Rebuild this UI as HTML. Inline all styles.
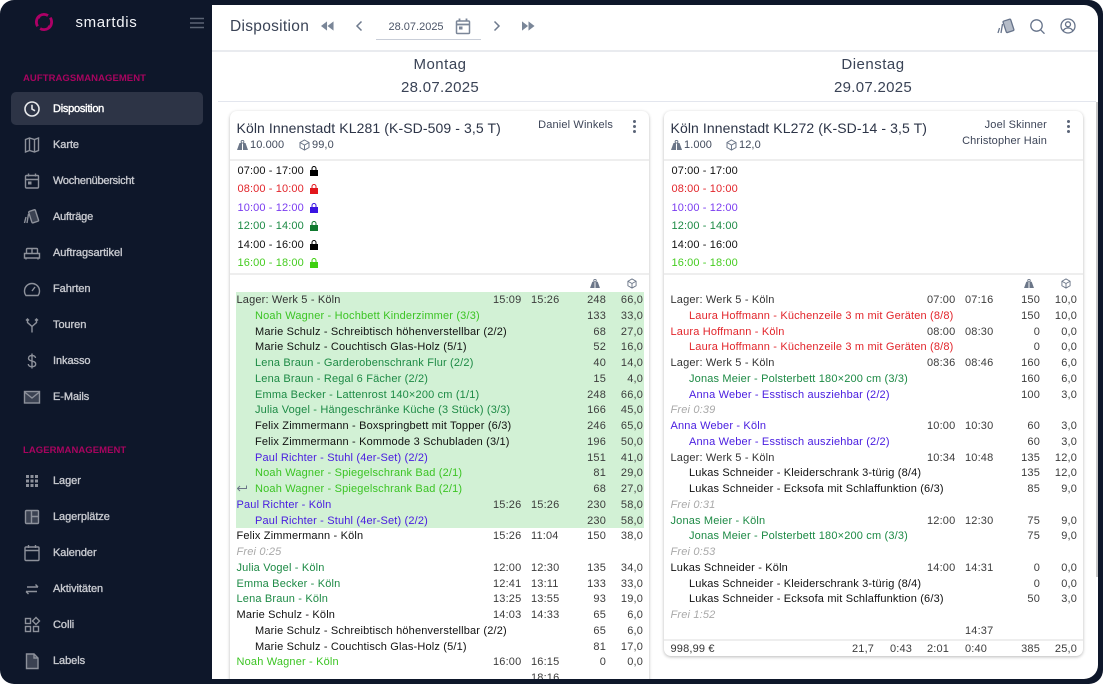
<!DOCTYPE html>
<html lang="de"><head><meta charset="utf-8"><title>Disposition</title>
<style>
*{box-sizing:border-box}
html,body{margin:0;padding:0;width:1103px;height:684px;overflow:hidden;background:#fff;font-family:"Liberation Sans",sans-serif}
#frame{position:absolute;left:0;top:0;width:1103px;height:684px;background:#0e172a;border-radius:14px;overflow:hidden}
#main{position:absolute;left:212px;top:5px;width:886px;height:674px;background:#fff;border-radius:0 14px 14px 0;overflow:hidden}
.a{position:absolute;white-space:nowrap}
.side{position:absolute;left:53px;margin-top:1px;font-size:11px;line-height:14px;color:#c7c9cf;-webkit-text-stroke:.35px #c7c9cf;letter-spacing:-.06px;white-space:nowrap}
.sec{position:absolute;left:23px;margin-top:1px;font-size:9.5px;line-height:12px;color:#a8045f;letter-spacing:.06px;font-weight:bold;white-space:nowrap}
.ic{position:absolute;left:23px;margin-top:1px;width:18px;height:18px;fill:none;stroke:#8d919b;stroke-width:1.4}
.card{position:absolute;top:106px;width:419px;background:#fff;border-radius:7px;box-shadow:0 1px 3px rgba(0,0,0,.28);overflow:hidden}
.sep{position:absolute;left:0;width:419px;height:2px;background:#eee}
.tt{position:absolute;left:6.5px;top:8px;font-size:14px;line-height:18px;color:#2c3447;letter-spacing:.1px;white-space:nowrap}
.cap{position:absolute;top:27px;font-size:11px;line-height:14px;color:#414a5c;white-space:nowrap;letter-spacing:.1px}
.drv{position:absolute;right:36px;margin-top:1px;font-size:11px;line-height:14px;color:#3d4558;text-align:right;white-space:nowrap;letter-spacing:.15px}
.ts{position:absolute;left:7.5px;margin-top:1px;font-size:11px;line-height:14px;letter-spacing:.12px;white-space:nowrap}
.r{position:absolute;left:6px;margin-top:1px;width:408px;height:16px;font-size:11px;line-height:16px;color:#333;letter-spacing:.17px;white-space:nowrap}
.r .n{position:absolute;left:.5px;top:0}
.r.i .n{left:19px}
.r .t1{position:absolute;left:257px;top:0;color:#3c3c3c}
.r .t2{position:absolute;left:295px;top:0;color:#3c3c3c}
.r .w{position:absolute;right:38px;top:0;color:#3c3c3c}
.r .v{position:absolute;right:1px;top:0;color:#3c3c3c}
.k .n{color:#111}.l .n{color:#333}
.re .n{color:#e2252b}.pu .n{color:#4a1ee0}.gr .n{color:#1d8a45}.li .n{color:#3cc424}
.fr .n{color:#a9a9a9;font-style:italic}
.g{position:absolute;left:6px;top:181px;width:408px;height:236px;background:#d2f1d5}
.dots{position:absolute;width:3px;height:3px;background:#5a6477;border-radius:50%;box-shadow:0 5px 0 #5a6477,0 10px 0 #5a6477}
.day{position:absolute;width:200px;text-align:center;font-size:15px;line-height:18px;color:#3a4356;letter-spacing:.3px}
.lk{position:absolute;left:80px}
</style></head><body>
<div id="frame">

<!-- logo -->
<svg class="a" style="left:34px;top:12px" width="20" height="20" viewBox="0 0 20 20" fill="none" stroke="#ad0066" stroke-width="2.8"><circle cx="10" cy="10" r="7.600" stroke-dasharray="20.500 3.400" transform="rotate(-35 10 10)"/><path d="M3.500 4.500l2.500 1.500M16.500 15.500L14 14" stroke-width="1.800"/></svg>
<div class="a" style="left:75.500px;top:14px;font-size:15px;line-height:18px;color:#f2f4f8;letter-spacing:.65px">smartdis</div>
<svg class="a" style="left:190px;top:17px" width="14" height="12" viewBox="0 0 14 12" fill="none" stroke="#5b6474" stroke-width="1.500"><path d="M0 1.500h14M0 6h14M0 10.500h14"/></svg>

<div class="sec" style="top:71.500px">AUFTRAGSMANAGEMENT</div>
<div class="a" style="left:11px;top:92px;width:192px;height:33px;background:#2d3446;border-radius:5px"></div>
<svg class="ic" style="top:99px;stroke:#e8e9ec;stroke-width:1.600" viewBox="0 0 18 18"><circle cx="9" cy="9" r="7"/><path d="M9 4.800V9l3 1.800"/></svg>
<div class="side" style="top:101px;color:#fff;-webkit-text-stroke:.4px #fff;letter-spacing:-.25px">Disposition</div>

<svg class="ic" style="top:135px" viewBox="0 0 18 18"><path d="M2.500 3.500L6.500 2l5 1.500 4-1.500v12.500l-4 1.500-5-1.500-4 1.500zM6.500 2v12.500M11.500 3.500V16"/></svg>
<div class="side" style="top:137px">Karte</div>
<svg class="ic" style="top:171px" viewBox="0 0 18 18"><rect x="2.500" y="3.500" width="13" height="12.500" rx="1"/><path d="M2.500 7.500h13M5.500 1.500v3M12.500 1.500v3"/><rect x="5" y="9.500" width="3.500" height="3" fill="#8d919b" stroke="none"/></svg>
<div class="side" style="top:173px;letter-spacing:-.25px">Wochenübersicht</div>
<svg class="ic" style="top:207px" viewBox="0 0 18 18"><rect x="7" y="2.500" width="7" height="12" rx="1" fill="#3b4252" transform="rotate(-18 10 8)"/><path d="M5.500 6L4 15M3 9L1.500 15"/></svg>
<div class="side" style="top:209px;letter-spacing:-.2px">Aufträge</div>
<svg class="ic" style="top:243px" viewBox="0 0 18 18"><path d="M1.500 9.500h15v4.500h-15zM3.500 9.500V5.500q0-1 1-1h9q1 0 1 1v4M9 4.500v5M3 14v1.500M15 14v1.500"/></svg>
<div class="side" style="top:245px">Auftragsartikel</div>
<svg class="ic" style="top:279px" viewBox="0 0 18 18"><path d="M3 15.500h12a7.500 7.500 0 1 0-12 0zM9 11l3-4"/></svg>
<div class="side" style="top:281px">Fahrten</div>
<svg class="ic" style="top:315px" viewBox="0 0 18 18"><path d="M9 16.500v-6L4.500 6.500V3M9 10.500l4.500-4V3M3 4.500L4.500 3 6 4.500M12 4.500L13.500 3 15 4.500"/></svg>
<div class="side" style="top:317px">Touren</div>
<svg class="ic" style="top:351px" viewBox="0 0 18 18"><path d="M12.500 6c0-1.500-1.500-2.500-3.500-2.500S5.500 4.500 5.500 6.200 7 8.500 9 9s3.700 1 3.700 3-1.700 2.700-3.700 2.700-3.700-1-3.700-2.700M9 1.500v15"/></svg>
<div class="side" style="top:353px">Inkasso</div>
<svg class="ic" style="top:387px" viewBox="0 0 18 18"><rect x="1.500" y="3.500" width="15" height="11.500" fill="#3b4252"/><path d="M1.500 4l7.500 6 7.500-6"/></svg>
<div class="side" style="top:389px">E-Mails</div>

<div class="sec" style="top:443.500px">LAGERMANAGEMENT</div>

<svg class="ic" style="top:471px;fill:#8d919b;stroke:none" viewBox="0 0 18 18"><path d="M3 3h3v3H3zM7.500 3h3v3h-3zM12 3h3v3h-3zM3 7.500h3v3H3zM7.500 7.500h3v3h-3zM12 7.500h3v3h-3zM3 12h3v3H3zM7.500 12h3v3h-3zM12 12h3v3h-3z"/></svg>
<div class="side" style="top:473px">Lager</div>
<svg class="ic" style="top:507px" viewBox="0 0 18 18"><rect x="2.500" y="2.500" width="13" height="13" rx="1" fill="#3b4252"/><path d="M8.500 2.500v13M8.500 8.500h7"/></svg>
<div class="side" style="top:509px">Lagerplätze</div>
<svg class="ic" style="top:543px" viewBox="0 0 18 18"><rect x="2" y="3" width="14" height="13.500" rx="1"/><path d="M2 6.500h14M5.500 1v3M12.500 1v3"/></svg>
<div class="side" style="top:545px">Kalender</div>
<svg class="ic" style="top:579px" viewBox="0 0 18 18"><path d="M4 7h11M12.500 4.500L15 7M14 11.500H3M5.500 14L3 11.500"/></svg>
<div class="side" style="top:581px">Aktivitäten</div>
<svg class="ic" style="top:615px" viewBox="0 0 18 18"><rect x="2.500" y="2.500" width="5" height="5"/><rect x="2.500" y="10.500" width="5" height="5"/><rect x="10.500" y="10.500" width="5" height="5"/><path d="M13 1.500l3.500 3.500-3.500 3.500L9.500 5z"/></svg>
<div class="side" style="top:617px">Colli</div>
<svg class="ic" style="top:651px" viewBox="0 0 18 18"><path d="M3.500 2h7.500l4 4v10.500h-11.500z" fill="#3b4252"/><path d="M11 2v4h4"/></svg>
<div class="side" style="top:653px">Labels</div>

<div id="main">
  <!-- top bar -->
  <div class="a" style="left:0;top:45px;width:886px;height:1.500px;background:#e9ebef"></div>
  <div class="a" style="left:18px;top:12px;font-size:15.500px;line-height:19px;color:#3a4356;letter-spacing:.3px">Disposition</div>
  <svg class="a" style="left:109px;top:16px" width="13" height="10" viewBox="0 0 14 10" fill="#7a8698"><path d="M6.500 0v10L0 5zM13.500 0v10L7 5z"/></svg>
  <svg class="a" style="left:142px;top:15px" width="10" height="12" viewBox="0 0 10 12" fill="none" stroke="#6e7a8d" stroke-width="1.500"><path d="M7.500 1.500L3 6l4.500 4.500"/></svg>
  <div class="a" style="left:176.500px;top:15px;font-size:11px;line-height:14px;color:#4c5568">28.07.2025</div>
  <svg class="a" style="left:243px;top:13px" width="16" height="17" viewBox="0 0 16 17" fill="none" stroke="#7b8698" stroke-width="1.500"><rect x="1.500" y="3" width="13" height="12.500" rx="1"/><path d="M1.500 6.500h13M4.500 .5v3M11.500 .5v3" stroke-width="1.800"/><rect x="4" y="8.500" width="3.500" height="3" fill="#7b8698" stroke="none"/></svg>
  <div class="a" style="left:164px;top:34px;width:105px;height:1.200px;background:#c9ced8"></div>
  <svg class="a" style="left:280px;top:15px" width="10" height="12" viewBox="0 0 10 12" fill="none" stroke="#6e7a8d" stroke-width="1.500"><path d="M2.500 1.500L7 6l-4.500 4.500"/></svg>
  <svg class="a" style="left:310px;top:16px" width="13" height="10" viewBox="0 0 14 10" fill="#7a8698"><path d="M0 0v10l6.500-5zM7 0v10l6.500-5z"/></svg>
  <svg class="a" style="left:784px;top:12px" width="20" height="20" viewBox="0 0 20 20" fill="none" stroke="#66738a" stroke-width="1.300"><rect x="8.500" y="3" width="8" height="12" rx="1" fill="#b5bcc8" transform="rotate(-18 12 9)"/><path d="M6.500 7L5 16M3.500 11L2 16"/></svg>
  <svg class="a" style="left:818px;top:14px" width="15" height="15" viewBox="0 0 15 15" fill="none" stroke="#66738a" stroke-width="1.300"><circle cx="6.500" cy="6.500" r="5.700"/><path d="M10.500 10.700l4 4"/></svg>
  <svg class="a" style="left:848px;top:13px" width="16" height="16" viewBox="0 0 16 16" fill="none" stroke="#66738a" stroke-width="1.300"><circle cx="8" cy="8" r="7"/><circle cx="8" cy="6.300" r="2.500"/><path d="M3.200 13c1-2.500 3-3 4.800-3s3.800.5 4.800 3"/></svg>

  <!-- day headers -->
  <div class="day" style="left:128px;top:51px;letter-spacing:.5px">Montag</div>
  <div class="day" style="left:128px;top:74px">28.07.2025</div>
  <div class="day" style="left:561px;top:51px;letter-spacing:.5px">Dienstag</div>
  <div class="day" style="left:561px;top:74px">29.07.2025</div>
  <div class="a" style="left:6px;top:96px;width:878px;height:1px;background:#e3e6ee"></div>
  <div class="a" style="left:884px;top:97px;width:2px;height:475px;background:#c8c8c8"></div>

  <!-- CARD 1 -->
  <div class="card" style="left:18px;height:600px">
    <div class="tt">Köln Innenstadt KL281 (K-SD-509 - 3,5 T)</div>
    <svg class="a" style="left:7px;top:29px" width="11" height="10" viewBox="0 0 11 10"><path d="M2.500 3h6l2.500 7H0z" fill="#6b7688"/><circle cx="5.500" cy="1.800" r="1.400" fill="none" stroke="#6b7688"/><path d="M5.500 3.500V10" stroke="#fff"/></svg>
    <div class="cap" style="left:20px">10.000</div>
    <svg class="a" style="left:69px;top:28px" width="11" height="12" viewBox="0 0 11 12" fill="none" stroke="#6b7688"><path d="M5.500 1L10 3.500v5L5.500 11 1 8.500v-5zM1 3.500L5.500 6 10 3.500M5.500 6v5"/></svg>
    <div class="cap" style="left:82px">99,0</div>
    <div class="drv" style="top:6px">Daniel Winkels</div>
    <div class="dots" style="left:402.500px;top:9px"></div>
    <div class="sep" style="top:48px"></div>

    <div class="ts" style="top:52px;color:#111">07:00 - 17:00</div>
    <svg class="lk" style="top:55px" width="8" height="10" viewBox="0 0 8 10"><path d="M0 4h8v6H0z" fill="#000"/><path d="M2 4V2.500a2 2 0 0 1 4 0V4" fill="none" stroke="#000"/></svg>
    <div class="ts" style="top:70px;color:#e2252b">08:00 - 10:00</div>
    <svg class="lk" style="top:73px" width="8" height="10" viewBox="0 0 8 10"><path d="M0 4h8v6H0z" fill="#e2161c"/><path d="M2 4V2.500a2 2 0 0 1 4 0V4" fill="none" stroke="#e2161c"/></svg>
    <div class="ts" style="top:89px;color:#7a3cf0">10:00 - 12:00</div>
    <svg class="lk" style="top:92px" width="8" height="10" viewBox="0 0 8 10"><path d="M0 4h8v6H0z" fill="#3a14e2"/><path d="M2 4V2.500a2 2 0 0 1 4 0V4" fill="none" stroke="#3a14e2"/></svg>
    <div class="ts" style="top:107px;color:#1d8a45">12:00 - 14:00</div>
    <svg class="lk" style="top:110px" width="8" height="10" viewBox="0 0 8 10"><path d="M0 4h8v6H0z" fill="#10792f"/><path d="M2 4V2.500a2 2 0 0 1 4 0V4" fill="none" stroke="#10792f"/></svg>
    <div class="ts" style="top:126px;color:#111">14:00 - 16:00</div>
    <svg class="lk" style="top:129px" width="8" height="10" viewBox="0 0 8 10"><path d="M0 4h8v6H0z" fill="#000"/><path d="M2 4V2.500a2 2 0 0 1 4 0V4" fill="none" stroke="#000"/></svg>
    <div class="ts" style="top:144px;color:#45cc20">16:00 - 18:00</div>
    <svg class="lk" style="top:147px" width="8" height="10" viewBox="0 0 8 10"><path d="M0 4h8v6H0z" fill="#3ed010"/><path d="M2 4V2.500a2 2 0 0 1 4 0V4" fill="none" stroke="#3ed010"/></svg>
    <div class="sep" style="top:162px"></div>

    <svg class="a" style="left:360px;top:168px" width="10" height="9" viewBox="0 0 11 10"><path d="M2.500 3h6l2.500 7H0z" fill="#6b7688"/><circle cx="5.500" cy="1.800" r="1.400" fill="none" stroke="#6b7688"/><path d="M5.500 3.500V10" stroke="#fff"/></svg>
    <svg class="a" style="left:397px;top:167px" width="10" height="11" viewBox="0 0 11 12" fill="none" stroke="#6b7688"><path d="M5.500 1L10 3.500v5L5.500 11 1 8.500v-5zM1 3.500L5.500 6 10 3.500M5.500 6v5"/></svg>

    <div class="g"></div>
    <div class="r l" style="top:180px"><span class="n">Lager: Werk 5 - Köln</span><span class="t1">15:09</span><span class="t2">15:26</span><span class="w">248</span><span class="v">66,0</span></div>
    <div class="r i li" style="top:196px"><span class="n">Noah Wagner - Hochbett Kinderzimmer (3/3)</span><span class="w">133</span><span class="v">33,0</span></div>
    <div class="r i k" style="top:212px"><span class="n">Marie Schulz - Schreibtisch höhenverstellbar (2/2)</span><span class="w">68</span><span class="v">27,0</span></div>
    <div class="r i k" style="top:227px"><span class="n">Marie Schulz - Couchtisch Glas-Holz (5/1)</span><span class="w">52</span><span class="v">16,0</span></div>
    <div class="r i gr" style="top:243px"><span class="n">Lena Braun - Garderobenschrank Flur (2/2)</span><span class="w">40</span><span class="v">14,0</span></div>
    <div class="r i gr" style="top:259px"><span class="n">Lena Braun - Regal 6 Fächer (2/2)</span><span class="w">15</span><span class="v">4,0</span></div>
    <div class="r i gr" style="top:275px"><span class="n">Emma Becker - Lattenrost 140×200 cm (1/1)</span><span class="w">248</span><span class="v">66,0</span></div>
    <div class="r i gr" style="top:290px"><span class="n">Julia Vogel - Hängeschränke Küche (3 Stück) (3/3)</span><span class="w">166</span><span class="v">45,0</span></div>
    <div class="r i k" style="top:306px"><span class="n">Felix Zimmermann - Boxspringbett mit Topper (6/3)</span><span class="w">246</span><span class="v">65,0</span></div>
    <div class="r i k" style="top:322px"><span class="n">Felix Zimmermann - Kommode 3 Schubladen (3/1)</span><span class="w">196</span><span class="v">50,0</span></div>
    <div class="r i pu" style="top:338px"><span class="n">Paul Richter - Stuhl (4er-Set) (2/2)</span><span class="w">151</span><span class="v">41,0</span></div>
    <div class="r i li" style="top:353px"><span class="n">Noah Wagner - Spiegelschrank Bad (2/1)</span><span class="w">81</span><span class="v">29,0</span></div>
    <svg class="a" style="left:7px;top:374px" width="10" height="7" viewBox="0 0 10 7" fill="none" stroke="#6b7688"><path d="M9.500 .5v3h-9M3 1L.5 3.500 3 6"/></svg>
    <div class="r i li" style="top:369px"><span class="n">Noah Wagner - Spiegelschrank Bad (2/1)</span><span class="w">68</span><span class="v">27,0</span></div>
    <div class="r pu" style="top:385px"><span class="n">Paul Richter - Köln</span><span class="t1">15:26</span><span class="t2">15:26</span><span class="w">230</span><span class="v">58,0</span></div>
    <div class="r i pu" style="top:401px"><span class="n">Paul Richter - Stuhl (4er-Set) (2/2)</span><span class="w">230</span><span class="v">58,0</span></div>
    <div class="r k" style="top:416px"><span class="n">Felix Zimmermann - Köln</span><span class="t1">15:26</span><span class="t2">11:04</span><span class="w">150</span><span class="v">38,0</span></div>
    <div class="r fr" style="top:432px"><span class="n">Frei 0:25</span></div>
    <div class="r gr" style="top:448px"><span class="n">Julia Vogel - Köln</span><span class="t1">12:00</span><span class="t2">12:30</span><span class="w">135</span><span class="v">34,0</span></div>
    <div class="r gr" style="top:464px"><span class="n">Emma Becker - Köln</span><span class="t1">12:41</span><span class="t2">13:11</span><span class="w">133</span><span class="v">33,0</span></div>
    <div class="r gr" style="top:479px"><span class="n">Lena Braun - Köln</span><span class="t1">13:25</span><span class="t2">13:55</span><span class="w">93</span><span class="v">19,0</span></div>
    <div class="r k" style="top:495px"><span class="n">Marie Schulz - Köln</span><span class="t1">14:03</span><span class="t2">14:33</span><span class="w">65</span><span class="v">6,0</span></div>
    <div class="r i k" style="top:511px"><span class="n">Marie Schulz - Schreibtisch höhenverstellbar (2/2)</span><span class="w">65</span><span class="v">6,0</span></div>
    <div class="r i k" style="top:527px"><span class="n">Marie Schulz - Couchtisch Glas-Holz (5/1)</span><span class="w">81</span><span class="v">17,0</span></div>
    <div class="r li" style="top:542px"><span class="n">Noah Wagner - Köln</span><span class="t1">16:00</span><span class="t2">16:15</span><span class="w">0</span><span class="v">0,0</span></div>
    <div class="r" style="top:558px"><span class="t2">18:16</span></div>
  </div>

  <!-- CARD 2 -->
  <div class="card" style="left:452px;height:545px">
    <div class="tt">Köln Innenstadt KL272 (K-SD-14 - 3,5 T)</div>
    <svg class="a" style="left:7px;top:29px" width="11" height="10" viewBox="0 0 11 10"><path d="M2.500 3h6l2.500 7H0z" fill="#6b7688"/><circle cx="5.500" cy="1.800" r="1.400" fill="none" stroke="#6b7688"/><path d="M5.500 3.500V10" stroke="#fff"/></svg>
    <div class="cap" style="left:20px">1.000</div>
    <svg class="a" style="left:62px;top:28px" width="11" height="12" viewBox="0 0 11 12" fill="none" stroke="#6b7688"><path d="M5.500 1L10 3.500v5L5.500 11 1 8.500v-5zM1 3.500L5.500 6 10 3.500M5.500 6v5"/></svg>
    <div class="cap" style="left:75px">12,0</div>
    <div class="drv" style="top:6px">Joel Skinner</div>
    <div class="drv" style="top:22px">Christopher Hain</div>
    <div class="dots" style="left:402.500px;top:9px"></div>
    <div class="sep" style="top:48px"></div>

    <div class="ts" style="top:52px;color:#111">07:00 - 17:00</div>
    <div class="ts" style="top:70px;color:#e2252b">08:00 - 10:00</div>
    <div class="ts" style="top:89px;color:#7a3cf0">10:00 - 12:00</div>
    <div class="ts" style="top:107px;color:#1d8a45">12:00 - 14:00</div>
    <div class="ts" style="top:126px;color:#111">14:00 - 16:00</div>
    <div class="ts" style="top:144px;color:#45cc20">16:00 - 18:00</div>
    <div class="sep" style="top:162px"></div>

    <svg class="a" style="left:360px;top:168px" width="10" height="9" viewBox="0 0 11 10"><path d="M2.500 3h6l2.500 7H0z" fill="#6b7688"/><circle cx="5.500" cy="1.800" r="1.400" fill="none" stroke="#6b7688"/><path d="M5.500 3.500V10" stroke="#fff"/></svg>
    <svg class="a" style="left:397px;top:167px" width="10" height="11" viewBox="0 0 11 12" fill="none" stroke="#6b7688"><path d="M5.500 1L10 3.500v5L5.500 11 1 8.500v-5zM1 3.500L5.500 6 10 3.500M5.500 6v5"/></svg>

    <div class="r l" style="top:180px"><span class="n">Lager: Werk 5 - Köln</span><span class="t1">07:00</span><span class="t2">07:16</span><span class="w">150</span><span class="v">10,0</span></div>
    <div class="r i re" style="top:196px"><span class="n">Laura Hoffmann - Küchenzeile 3 m mit Geräten (8/8)</span><span class="w">150</span><span class="v">10,0</span></div>
    <div class="r re" style="top:212px"><span class="n">Laura Hoffmann - Köln</span><span class="t1">08:00</span><span class="t2">08:30</span><span class="w">0</span><span class="v">0,0</span></div>
    <div class="r i re" style="top:227px"><span class="n">Laura Hoffmann - Küchenzeile 3 m mit Geräten (8/8)</span><span class="w">0</span><span class="v">0,0</span></div>
    <div class="r l" style="top:243px"><span class="n">Lager: Werk 5 - Köln</span><span class="t1">08:36</span><span class="t2">08:46</span><span class="w">160</span><span class="v">6,0</span></div>
    <div class="r i gr" style="top:259px"><span class="n">Jonas Meier - Polsterbett 180×200 cm (3/3)</span><span class="w">160</span><span class="v">6,0</span></div>
    <div class="r i pu" style="top:275px"><span class="n">Anna Weber - Esstisch ausziehbar (2/2)</span><span class="w">100</span><span class="v">3,0</span></div>
    <div class="r fr" style="top:290px"><span class="n">Frei 0:39</span></div>
    <div class="r pu" style="top:306px"><span class="n">Anna Weber - Köln</span><span class="t1">10:00</span><span class="t2">10:30</span><span class="w">60</span><span class="v">3,0</span></div>
    <div class="r i pu" style="top:322px"><span class="n">Anna Weber - Esstisch ausziehbar (2/2)</span><span class="w">60</span><span class="v">3,0</span></div>
    <div class="r l" style="top:338px"><span class="n">Lager: Werk 5 - Köln</span><span class="t1">10:34</span><span class="t2">10:48</span><span class="w">135</span><span class="v">12,0</span></div>
    <div class="r i k" style="top:353px"><span class="n">Lukas Schneider - Kleiderschrank 3-türig (8/4)</span><span class="w">135</span><span class="v">12,0</span></div>
    <div class="r i k" style="top:369px"><span class="n">Lukas Schneider - Ecksofa mit Schlaffunktion (6/3)</span><span class="w">85</span><span class="v">9,0</span></div>
    <div class="r fr" style="top:385px"><span class="n">Frei 0:31</span></div>
    <div class="r gr" style="top:401px"><span class="n">Jonas Meier - Köln</span><span class="t1">12:00</span><span class="t2">12:30</span><span class="w">75</span><span class="v">9,0</span></div>
    <div class="r i gr" style="top:416px"><span class="n">Jonas Meier - Polsterbett 180×200 cm (3/3)</span><span class="w">75</span><span class="v">9,0</span></div>
    <div class="r fr" style="top:432px"><span class="n">Frei 0:53</span></div>
    <div class="r k" style="top:448px"><span class="n">Lukas Schneider - Köln</span><span class="t1">14:00</span><span class="t2">14:31</span><span class="w">0</span><span class="v">0,0</span></div>
    <div class="r i k" style="top:464px"><span class="n">Lukas Schneider - Kleiderschrank 3-türig (8/4)</span><span class="w">0</span><span class="v">0,0</span></div>
    <div class="r i k" style="top:479px"><span class="n">Lukas Schneider - Ecksofa mit Schlaffunktion (6/3)</span><span class="w">50</span><span class="v">3,0</span></div>
    <div class="r fr" style="top:495px"><span class="n">Frei 1:52</span></div>
    <div class="r" style="top:511px"><span class="t2">14:37</span></div>
    <div class="sep" style="top:528px"></div>
    <div class="r" style="top:529px"><span class="n">998,99 €</span><span class="a" style="left:182px;top:0;color:#3c3c3c">21,7</span><span class="a" style="left:220px;top:0;color:#3c3c3c">0:43</span><span class="t1">2:01</span><span class="t2">0:40</span><span class="w">385</span><span class="v">25,0</span></div>
  </div>
</div>
</div>
</body></html>
